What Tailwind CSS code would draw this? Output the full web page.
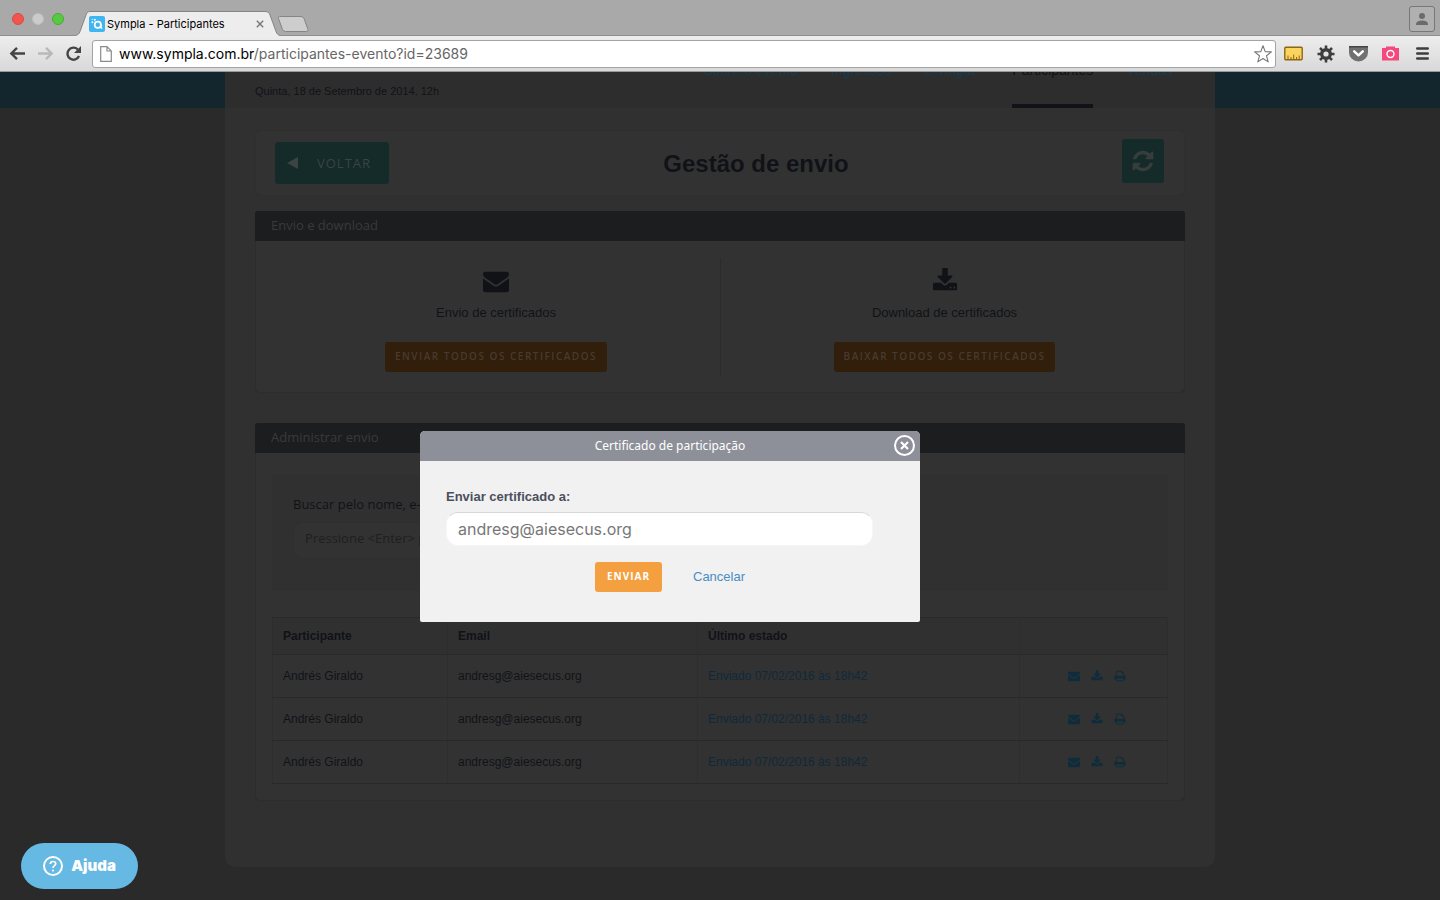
<!DOCTYPE html>
<html lang="pt-BR">
<head>
<meta charset="utf-8">
<meta name="viewport" content="width=device-width, initial-scale=1">
<title>Sympla - Participantes</title>
<script src="https://cdn.jsdelivr.net/npm/@tailwindcss/browser@4"></script>
</head>
<body class="flex min-h-screen flex-col bg-[#2a2a2a] font-['Liberation_Sans',sans-serif] text-[13px] leading-5 text-[#111217]">

<!-- Shared icon symbols -->
<svg class="hidden" aria-hidden="true">
  <symbol id="i-mail" viewBox="0 0 1792 1792"><path fill="currentColor" d="M1792 710v794q0 66-47 113t-113 47h-1472q-66 0-113-47t-47-113v-794q44 49 101 87 362 246 497 345 57 42 92.5 65.5t94.5 48 110 24.5h2q51 0 110-24.5t94.5-48 92.5-65.5q170-123 498-345 57-39 100-87zm0-294q0 79-49 151t-122 123q-376 261-468 325-10 7-42.5 31t-54 39-52 32.5-57.5 27-50 9.5h-2q-23 0-50-9.5t-57.5-27-52-32.5-54-39-42.5-31q-91-64-262-182.5t-205-142.5q-62-42-117-115.5t-55-136.5q0-78 41.5-130t118.5-52h1472q65 0 112.5 47t47.5 113z"/></symbol>
  <symbol id="i-down" viewBox="0 0 1792 1792"><path fill="currentColor" d="M1344 1344q0-26-19-45t-45-19-45 19-19 45 19 45 45 19 45-19 19-45zm256 0q0-26-19-45t-45-19-45 19-19 45 19 45 45 19 45-19 19-45zm128-224v320q0 40-28 68t-68 28h-1472q-40 0-68-28t-28-68v-320q0-40 28-68t68-28h465l135 136q58 56 136 56t136-56l136-136h464q40 0 68 28t28 68zm-325-569q17 41-14 70l-448 448q-18 19-45 19t-45-19l-448-448q-31-29-14-70 17-39 59-39h256v-448q0-26 19-45t45-19h256q26 0 45 19t19 45v448h256q42 0 59 39z"/></symbol>
  <symbol id="i-refresh" viewBox="0 0 1792 1792"><path fill="currentColor" d="M1639 1056q0 5-1 7-64 268-268 434.5t-478 166.5q-146 0-282.5-55t-243.5-157l-129 129q-19 19-45 19t-45-19-19-45v-448q0-26 19-45t45-19h448q26 0 45 19t19 45-19 45l-137 137q71 66 161 102t187 36q134 0 250-65t186-179q11-17 53-117 8-23 30-23h192q13 0 22.5 9.5t9.5 22.5zm25-800v448q0 26-19 45t-45 19h-448q-26 0-45-19t-19-45 19-45l138-138q-148-137-349-137-134 0-250 65t-186 179q-11 17-53 117-8 23-30 23h-199q-13 0-22.5-9.5t-9.5-22.5v-7q65-268 270-434.5t480-166.5q146 0 284 55.5t245 156.5l130-129q19-19 45-19t45 19 19 45z"/></symbol>
  <symbol id="i-print" viewBox="0 0 1792 1792"><path fill="currentColor" d="M448 1536h896v-256h-896v256zm0-640h896v-384h-160q-40 0-68-28t-28-68v-160h-640v640zm1152 64q0-26-19-45t-45-19-45 19-19 45 19 45 45 19 45-19 19-45zm128 0v416q0 13-9.5 22.5t-22.5 9.5h-224v160q0 40-28 68t-68 28h-960q-40 0-68-28t-28-68v-160h-224q-13 0-22.5-9.5t-9.5-22.5v-416q0-79 56.5-135.5t135.5-56.5h64v-544q0-40 28-68t68-28h672q40 0 88 20t76 48l152 152q28 28 48 76t20 88v256h64q79 0 135.5 56.5t56.5 135.5z"/></symbol>
</svg>

<!-- Browser window -->
<header class="font-['Inter',sans-serif]">
  <div class="flex h-9 items-end border-b border-[#8e8e8e] bg-[#a9a9a9]">
    <div class="flex h-full items-center gap-2 pl-3 pr-[11px] pt-[3px]">
      <button class="size-3 rounded-full border border-[#de4a43] bg-[#f0554e]" aria-label="Fechar janela"></button>
      <button class="size-3 rounded-full border border-[#bdbdbd] bg-[#cbcbcb]" aria-label="Minimizar"></button>
      <button class="size-3 rounded-full border border-[#48ac35] bg-[#58c943]" aria-label="Tela cheia"></button>
    </div>
    <div class="relative -mb-px flex h-[25px] w-[205px] items-center gap-[2px] pl-[14px] pr-4 text-[11px] leading-4 text-black">
      <svg class="absolute inset-0 h-[25px] w-[205px]" viewBox="0 0 205 25" aria-hidden="true"><path d="M0 24.500C3 24 4 23 5 20.500L11 4C12 1.500 13 .5 15 .5H190C193 .5 194 1.500 195 4L201 20.500C202 23 203 24 205 24.500V25H0Z" fill="#ededed"/><path d="M0 24.500C3 24 4 23 5 20.500L11 4C12 1.500 13 .5 15 .5H190C193 .5 194 1.500 195 4L201 20.500C202 23 203 24 205 24.500" fill="none" stroke="#858585"/></svg>
      <svg class="relative size-4 shrink-0" viewBox="0 0 16 16" aria-hidden="true"><rect width="16" height="16" rx="2" fill="#3fb5f2"/><circle cx="8.800" cy="8.800" r="3.100" fill="none" stroke="#fff" stroke-width="1.700"/><path d="M11.900 8.500v2.500q0 1.200 1.300 1.100" fill="none" stroke="#fff" stroke-width="1.600"/><circle cx="3.400" cy="6.300" r="1" fill="#fff"/><circle cx="5.800" cy="3.700" r="1" fill="#fff"/><circle cx="3.200" cy="3.300" r=".6" fill="#fff"/></svg>
      <span class="relative grow whitespace-nowrap">Sympla - Participantes</span>
      <button class="relative" aria-label="Fechar aba"><svg class="size-2" viewBox="0 0 8 8"><path d="M.8.8l6.400 6.400M7.200.8L.8 7.200" stroke="#777" stroke-width="1.400"/></svg></button>
    </div>
    <button class="mb-[3px] -ml-[3px]" aria-label="Nova aba"><svg class="h-4 w-8" viewBox="0 0 32 16"><path d="M2.500 .5H24q2 0 3 2l4 11q.5 2-1.500 2H8.500q-2 0-3-2l-4-11q-.5-2 1-2z" fill="#cdcdcd" stroke="#858585"/></svg></button>
    <button class="mb-[3px] ml-auto mr-[5px] grid size-[26px] place-items-center rounded-[3px] border border-[#777] bg-[#b0b0b0]" aria-label="Perfil"><svg class="size-3" viewBox="0 0 12 12"><circle cx="6" cy="3" r="3" fill="#6b6b6b"/><path d="M0 12V10.500Q1 7.500 6 7.500T12 10.500V12Z" fill="#6b6b6b"/></svg></button>
  </div>
  <div class="flex h-9 items-center border-b border-[#999] bg-linear-to-b from-[#ededed] to-[#d9d9d9] pl-[9px] pr-[11px]">
    <button aria-label="Voltar"><svg class="h-4 w-[17px]" viewBox="0 0 17 16"><path d="M16 7.500H2.500M8 1.800L2.300 7.500 8 13.200" fill="none" stroke="#444" stroke-width="2.400"/></svg></button>
    <button class="ml-[11px]" aria-label="Avançar"><svg class="h-4 w-[17px]" viewBox="0 0 17 16"><path d="M1 7.500h13.500M9 1.800l5.700 5.700L9 13.200" fill="none" stroke="#b9b9b9" stroke-width="2.400"/></svg></button>
    <button class="ml-[11px]" aria-label="Recarregar"><svg class="h-4 w-[17px]" viewBox="0 0 17 16"><path d="M14 10A6 6 0 1 1 12.800 3.500" fill="none" stroke="#444" stroke-width="2.400"/><path d="M16 0V7H9Z" fill="#444"/></svg></button>
    <div class="ml-[10px] flex h-7 grow items-center gap-[7px] rounded-[3px] border border-[#a3a3a3] bg-white pl-[7px] pr-[3px]">
      <svg class="h-4 w-3 shrink-0" viewBox="0 0 12 16" aria-hidden="true"><path d="M.7 .7H7L11.300 5V15.300H.7ZM7 .7V5h4.300" fill="#fff" stroke="#8b8b8b" stroke-width="1.200"/></svg>
      <div class="grow whitespace-nowrap text-sm text-[#666] outline-none" role="textbox" contenteditable="true" aria-label="Endereço"><span class="text-black">www.sympla.com.br</span>/participantes-evento?id=23689</div>
      <button aria-label="Favoritar"><svg class="size-[18px]" viewBox="0 0 18 18"><path d="M9 .8l2.200 5.800 6.200.3-4.900 3.900 1.700 6.100L9 13.500l-5.200 3.400 1.700-6.100L.6 6.900l6.200-.3Z" fill="#fff" stroke="#777" stroke-width="1.100" stroke-linejoin="round"/></svg></button>
    </div>
    <div class="ml-2 flex items-center gap-[14px]">
      <button aria-label="Régua"><svg class="h-4 w-[19px]" viewBox="0 0 19 16"><rect x=".8" y="1.300" width="17.400" height="12.400" rx="1" fill="#fbd45e" stroke="#8d6518" stroke-width="1.400"/><path d="M4 13V9.500M7 13V11M9.700 13V8.500M12.500 13V11M15.200 13V9.500" stroke="#8d6518"/></svg></button>
      <button aria-label="Configurações"><svg class="size-[18px]" viewBox="0 0 18 18"><circle cx="9" cy="9" r="4.300" fill="none" stroke="#3d3d3d" stroke-width="3.400"/><path d="M9 .5V4M9 14v3.500M.5 9H4M14 9h3.500M3 3l2.400 2.400M12.600 12.600L15 15M3 15l2.400-2.400M12.600 5.400L15 3" stroke="#3d3d3d" stroke-width="2.600"/></svg></button>
      <button aria-label="Pocket"><svg class="h-[17px] w-[19px]" viewBox="0 0 19 17"><path d="M0 1H19V7.500A9.500 9 0 0 1 0 7.500Z" fill="#707070"/><path d="M0 1H19V2.500H0Z" fill="#444"/><path d="M5.200 6.300L9.500 10.300l4.300-4" fill="none" stroke="#fff" stroke-width="2.500" stroke-linecap="round" stroke-linejoin="round"/></svg></button>
      <button aria-label="Capturar tela"><svg class="h-4 w-[17px]" viewBox="0 0 17 16"><path d="M0 2H4V.5h9V2h4v12.500H0Z" fill="#f5487f"/><circle cx="8.500" cy="8" r="3.500" fill="none" stroke="#fff" stroke-width="1.400"/></svg></button>
      <button class="ml-[3px]" aria-label="Menu"><svg class="h-[13px] w-[13px]" viewBox="0 0 13 13"><path d="M1.200 1.500H11.800M1.200 6.500H11.800M1.200 11.500H11.800" stroke="#3d3d3d" stroke-width="2.400" stroke-linecap="round"/></svg></button>
    </div>
  </div>
</header>

<!-- Event header, scrolled partly out of view -->
<div class="h-9 overflow-hidden bg-[#14262d]">
  <div class="mx-auto flex h-9 max-w-[990px] items-end justify-between bg-[#2d2d2d] pl-[30px] pr-[42px]">
    <p class="pb-[7px] text-[11px]">Quinta, 18 de Setembro de 2014, 12h</p>
    <nav class="flex gap-[33px] text-sm leading-5 text-[#163a4f]">
      <a href="#" class="h-12">Sobre o evento</a>
      <a href="#" class="h-12">Ingressos</a>
      <a href="#" class="h-12">Divulgue</a>
      <a href="#" class="h-12 border-b-4 border-[#111217] text-[#111217]" aria-current="page">Participantes</a>
      <a href="#" class="h-12">Vendas</a>
    </nav>
  </div>
</div>

<main class="mx-auto w-full max-w-[990px] rounded-b-[10px] bg-[#303030] px-[30px] pb-[66px] pt-[22px]">
  <section class="flex h-[66px] items-center justify-between rounded-md border border-[#2e2e2e] bg-[#323232] pl-[19px] pr-5">
    <button class="flex h-[42px] w-[114px] items-center gap-[19px] rounded-[3px] bg-[#142b29] pl-3 font-['Open_Sans',sans-serif] text-[13px] tracking-[1px] text-[#3b4443]">
      <svg class="h-3 w-[11px]" viewBox="0 0 11 12" aria-hidden="true"><path d="M0 6L11 0V12Z" fill="#3b4443"/></svg>VOLTAR
    </button>
    <h1 class="ml-[70px] pt-0.5 text-2xl font-bold">Gestão de envio</h1>
    <button class="mb-[5px] ml-[69px] grid h-11 w-[42px] place-items-center rounded-[3px] bg-[#142b29] text-[#363d3c]" aria-label="Atualizar"><svg class="size-6"><use href="#i-refresh"/></svg></button>
  </section>

  <section class="mt-[15px]">
    <h2 class="h-[30px] rounded-t-[3px] bg-[#1c1d1f] px-4 font-['Open_Sans',sans-serif] text-[13px] leading-7 text-[#3a3a3b]">Envio e download</h2>
    <div class="grid grid-cols-2 rounded-b-md border border-t-0 border-[#2c2c2c] bg-[#323232] px-4 pb-4 pt-[17px]">
      <div class="flex h-[118px] flex-col items-center pt-[10px]">
        <svg class="size-[26px]" aria-hidden="true"><use href="#i-mail"/></svg>
        <p class="mt-[9px]">Envio de certificados</p>
        <button class="mt-[19px] h-[30px] rounded-[3px] bg-[#311e0b] px-[10px] pb-0.5 font-['Open_Sans',sans-serif] text-[10px] font-semibold tracking-[1.5px] text-[#483b2e]">ENVIAR TODOS OS CERTIFICADOS</button>
      </div>
      <div class="flex h-[118px] flex-col items-center border-l border-[#2b2b2b] pt-[10px]">
        <svg class="size-[26px]" aria-hidden="true"><use href="#i-down"/></svg>
        <p class="mt-[9px]">Download de certificados</p>
        <button class="mt-[19px] h-[30px] rounded-[3px] bg-[#311e0b] px-[10px] pb-0.5 font-['Open_Sans',sans-serif] text-[10px] font-semibold tracking-[1.5px] text-[#483b2e]">BAIXAR TODOS OS CERTIFICADOS</button>
      </div>
    </div>
  </section>

  <section class="mt-[30px]">
    <h2 class="h-[30px] rounded-t-[3px] bg-[#1c1d1f] px-4 font-['Open_Sans',sans-serif] text-[13px] leading-7 text-[#3a3a3b]">Administrar envio</h2>
    <div class="rounded-b-md border border-t-0 border-[#2c2c2c] bg-[#323232] px-4 pb-4 pt-[22px]">
      <form class="flex h-[116px] flex-col rounded-[3px] bg-[#303030] px-[21px] pt-[19px] font-['Open_Sans',sans-serif]">
        <label for="busca" class="text-[13px] font-medium">Buscar pelo nome, e-mail</label>
        <input id="busca" type="text" placeholder="Pressione &lt;Enter&gt; para buscar" class="mt-2 h-[37px] w-[300px] rounded-[10px] border border-[#2f2f2f] bg-[#323232] px-[11px] pb-[5px] text-[13px] placeholder:text-[#1f1f1f]">
      </form>
      <table class="mt-[26px] w-full table-fixed border-collapse text-xs [&_td]:h-[43px] [&_td]:border [&_td]:border-x-[#2e2e2e] [&_td]:border-y-[#292929] [&_td]:px-[10px] [&_th]:h-[37px] [&_th]:border [&_th]:border-x-[#2d2d2d] [&_th]:border-y-[#292929] [&_th]:px-[10px] [&_th]:text-left">
        <colgroup><col class="w-[175px]"><col class="w-[250px]"><col class="w-[322px]"><col></colgroup>
        <thead class="bg-[#303030]"><tr><th>Participante</th><th>Email</th><th>Último estado</th><th aria-label="Ações"></th></tr></thead>
        <tbody>
          <tr><td>Andrés Giraldo</td><td>andresg@aiesecus.org</td><td><a href="#" class="text-[#10293a]">Enviado 07/02/2016 às 18h42</a></td>
            <td><div class="flex justify-center gap-[11px] pl-[7px] text-[#0f2c3d]"><a href="#" aria-label="Enviar"><svg class="size-3"><use href="#i-mail"/></svg></a><a href="#" aria-label="Baixar"><svg class="size-3"><use href="#i-down"/></svg></a><a href="#" aria-label="Imprimir"><svg class="size-3"><use href="#i-print"/></svg></a></div></td></tr>
          <tr><td>Andrés Giraldo</td><td>andresg@aiesecus.org</td><td><a href="#" class="text-[#10293a]">Enviado 07/02/2016 às 18h42</a></td>
            <td><div class="flex justify-center gap-[11px] pl-[7px] text-[#0f2c3d]"><a href="#" aria-label="Enviar"><svg class="size-3"><use href="#i-mail"/></svg></a><a href="#" aria-label="Baixar"><svg class="size-3"><use href="#i-down"/></svg></a><a href="#" aria-label="Imprimir"><svg class="size-3"><use href="#i-print"/></svg></a></div></td></tr>
          <tr><td>Andrés Giraldo</td><td>andresg@aiesecus.org</td><td><a href="#" class="text-[#10293a]">Enviado 07/02/2016 às 18h42</a></td>
            <td><div class="flex justify-center gap-[11px] pl-[7px] text-[#0f2c3d]"><a href="#" aria-label="Enviar"><svg class="size-3"><use href="#i-mail"/></svg></a><a href="#" aria-label="Baixar"><svg class="size-3"><use href="#i-down"/></svg></a><a href="#" aria-label="Imprimir"><svg class="size-3"><use href="#i-print"/></svg></a></div></td></tr>
        </tbody>
      </table>
    </div>
  </section>
</main>

<!-- Certificate dialog -->
<div role="dialog" aria-labelledby="dlg-title" class="absolute left-[calc(50%-300px)] top-[431px] w-[500px] overflow-hidden rounded-b-[2px] rounded-t-[5px] bg-[#f1f1f1]">
  <div class="relative h-[30px] bg-[#8d9099] text-center font-['Noto_Sans',sans-serif] text-xs leading-[30px] text-white">
    <h2 id="dlg-title">Certificado de participação</h2>
    <button class="absolute right-[5px] top-1" aria-label="Fechar"><svg class="size-[21px]" viewBox="0 0 21 21"><circle cx="10.500" cy="10.500" r="9.500" fill="none" stroke="#fff" stroke-width="2"/><path d="M7 7l7 7M14 7l-7 7" stroke="#fff" stroke-width="2.200"/></svg></button>
  </div>
  <form class="px-[26px] pb-[30px] pt-[26px]">
    <label for="email" class="block font-bold text-[#4b4f5c]">Enviar certificado a:</label>
    <input id="email" type="email" value="andresg@aiesecus.org" class="mt-[5px] block h-[34px] w-[427px] rounded-[12px] border border-x-[#f6f6f6] border-b-[#f6f6f6] border-t-[#d8d8d8] bg-white px-[11px] font-['Inter',sans-serif] text-base text-[#777]">
    <div class="mt-4 flex items-center justify-center gap-[31px]">
      <button type="button" class="h-[30px] rounded-[3px] bg-[#f49f40] px-3 pb-0.5 font-['Open_Sans',sans-serif] text-[10px] font-bold tracking-[1px] text-white">ENVIAR</button>
      <a href="#" class="text-[#4a8cc5]">Cancelar</a>
    </div>
  </form>
</div>

<!-- Floating help button -->
<button class="fixed bottom-[11px] left-[21px] flex h-[46px] w-[117px] items-center justify-center gap-2 rounded-full bg-[#65b9e2] font-['Inter',sans-serif] text-[15px] font-black text-white">
  <svg class="size-5" viewBox="0 0 20 20" aria-hidden="true"><circle cx="10" cy="10" r="9" fill="none" stroke="#fff" stroke-width="2"/><path d="M7.300 8Q7.400 5.500 10 5.500T12.700 7.800C12.700 9.700 10 9.600 10 12" fill="none" stroke="#fff" stroke-width="1.700"/><circle cx="10" cy="14.500" r="1.100" fill="#fff"/></svg>Ajuda
</button>
</body>
</html>
